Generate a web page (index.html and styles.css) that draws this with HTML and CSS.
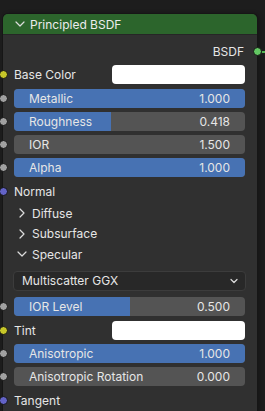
FILE: index.html
```html
<!DOCTYPE html>
<html lang="en">

<head>
    <meta charset="UTF-8">
    <meta name="viewport" content="width=device-width, initial-scale=1.0">
    <title>Principled BSDF</title>
    <link rel="stylesheet" href="styles.css">
</head>

<body>

    <div class="canvas">
        <div class="node">
            <div class="node-header">
                <svg class="chevron" width="10" height="6" viewBox="0 0 10 6">
                    <path d="M1 1 L5 5 L9 1" />
                </svg>
                <span>Principled BSDF</span>
            </div>

            <div class="node-body">
                <div class="row output">
                    <span class="label">BSDF</span>
                    <span class="socket socket-out shader"></span>
                </div>

                <div class="row">
                    <span class="socket color"></span>
                    <span class="label">Base Color</span>
                    <span class="swatch"></span>
                </div>

                <div class="row">
                    <span class="socket value"></span>
                    <div class="slider">
                        <div class="fill" style="width: 100%"></div>
                        <span class="name">Metallic</span>
                        <span class="num">1.000</span>
                    </div>
                </div>

                <div class="row">
                    <span class="socket value"></span>
                    <div class="slider">
                        <div class="fill" style="width: 41.8%"></div>
                        <span class="name">Roughness</span>
                        <span class="num">0.418</span>
                    </div>
                </div>

                <div class="row">
                    <span class="socket value"></span>
                    <div class="slider plain">
                        <span class="name">IOR</span>
                        <span class="num">1.500</span>
                    </div>
                </div>

                <div class="row">
                    <span class="socket value"></span>
                    <div class="slider">
                        <div class="fill" style="width: 100%"></div>
                        <span class="name">Alpha</span>
                        <span class="num">1.000</span>
                    </div>
                </div>

                <div class="row">
                    <span class="socket vector"></span>
                    <span class="label">Normal</span>
                </div>

                <!-- collapsible panels -->
                <div class="panel-head">
                    <svg class="arrow" width="10" height="10" viewBox="0 0 10 10">
                        <path d="M3 1 L7 5 L3 9" />
                    </svg>
                    <span>Diffuse</span>
                </div>
                <div class="panel-head">
                    <svg class="arrow" width="10" height="10" viewBox="0 0 10 10">
                        <path d="M3 1 L7 5 L3 9" />
                    </svg>
                    <span>Subsurface</span>
                </div>
                <div class="panel-head">
                    <svg class="arrow" width="10" height="10" viewBox="0 0 10 10">
                        <path d="M1 3 L5 7 L9 3" />
                    </svg>
                    <span>Specular</span>
                </div>

                <div class="panel-body">
                    <div class="dropdown">
                        <span>Multiscatter GGX</span>
                        <svg width="8" height="6" viewBox="0 0 8 6">
                            <path d="M1 1.5 L4 4.5 L7 1.5" />
                        </svg>
                    </div>

                    <div class="row">
                        <span class="socket value"></span>
                        <div class="slider">
                            <div class="fill" style="width: 50%"></div>
                            <span class="name">IOR Level</span>
                            <span class="num">0.500</span>
                        </div>
                    </div>

                    <div class="row">
                        <span class="socket color"></span>
                        <span class="label">Tint</span>
                        <span class="swatch"></span>
                    </div>

                    <div class="row">
                        <span class="socket value"></span>
                        <div class="slider">
                            <div class="fill" style="width: 100%"></div>
                            <span class="name">Anisotropic</span>
                            <span class="num">1.000</span>
                        </div>
                    </div>

                    <div class="row">
                        <span class="socket value"></span>
                        <div class="slider plain">
                            <span class="name">Anisotropic Rotation</span>
                            <span class="num">0.000</span>
                        </div>
                    </div>

                    <div class="row">
                        <span class="socket vector"></span>
                        <span class="label">Tangent</span>
                    </div>
                </div>
            </div>
        </div>
    </div>

</body>

</html>
```

FILE: styles.css
```css
body {
    margin: 0;
    padding: 0;
    background-color: #1d1d1d;
    font-family: Inter, "Noto Sans", sans-serif;
    font-size: 12px;
    color: #e6e6e6;
    overflow: hidden;
}

.canvas {
    width: 265px;
    height: 411px;
    padding-top: 14px;
    padding-left: 3px;
    box-sizing: border-box;
    overflow: hidden;
}

.node {
    width: 254px;
    background-color: #303030;
    border-radius: 5px 5px 0 0;
    box-shadow: 0 0 0 1px #161616, 2px 0 4px rgba(0, 0, 0, 0.35);
}

.node-header {
    height: 20px;
    display: flex;
    align-items: center;
    background-color: #2c652c;
    border-radius: 5px 5px 0 0;
    color: #ececec;
    border-bottom: 1px solid #262626;
}

.chevron {
    margin-left: 12px;
    margin-right: 5px;
}

.chevron path,
.arrow path,
.dropdown path {
    fill: none;
    stroke: #dcdcdc;
    stroke-width: 1.2;
    stroke-linecap: round;
    stroke-linejoin: round;
}

.node-body {
    padding-top: 4.85px;
}

.row {
    position: relative;
    height: 23.3px;
    display: flex;
    align-items: center;
    padding: 0 12px 0 11px;
}

.row.output {
    justify-content: flex-end;
    padding-right: 13px;
}

.label {
    flex: 1;
}

.output .label {
    flex: none;
}

/* sockets sit on the node edge */
.socket {
    position: absolute;
    left: -4px;
    top: 50%;
    width: 7px;
    height: 7px;
    margin-top: -4.5px;
    border-radius: 50%;
    border: 1px solid #141414;
}

.socket-out {
    left: auto;
    right: -5px;
}

.socket-out::after {
    content: "";
    position: absolute;
    left: 8px;
    top: 3px;
    width: 12px;
    height: 2px;
    background-color: #55b555;
}

.shader { background-color: #63c763; }
.color { background-color: #c7c729; }
.value { background-color: #a1a1a1; }
.vector { background-color: #6363c7; }

.swatch {
    width: 133px;
    height: 19px;
    background-color: #ffffff;
    border-radius: 4px;
}

.slider {
    position: relative;
    flex: 1;
    height: 19px;
    display: flex;
    align-items: center;
    justify-content: space-between;
    padding: 0 15px;
    background-color: #545454;
    border-radius: 4px;
    overflow: hidden;
}

.slider .fill {
    position: absolute;
    left: 0;
    top: 0;
    bottom: 0;
    background-color: #4772b3;
}

.slider .name,
.slider .num {
    position: relative;
}

.panel-head {
    height: 20.5px;
    display: flex;
    align-items: center;
    padding-left: 14px;
}

.arrow {
    margin-right: 5px;
}

.panel-body {
    padding-top: 6.5px;
}

.dropdown {
    height: 18px;
    margin: 0 11px 4.3px 10px;
    display: flex;
    align-items: center;
    justify-content: space-between;
    padding: 0 7px 0 8px;
    background-color: #282828;
    border: 1px solid #3c3c3c;
    border-radius: 4px;
}
```
